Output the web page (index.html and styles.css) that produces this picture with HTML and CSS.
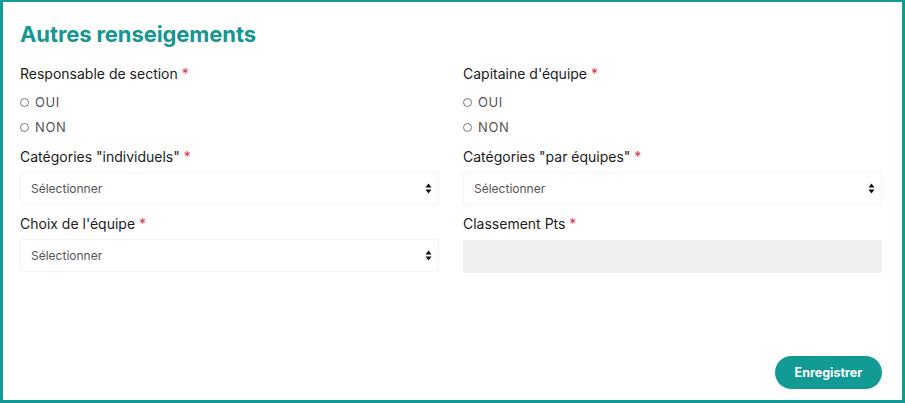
FILE: index.html
```html
<!DOCTYPE html>
<html lang="fr">
<head>
  <meta charset="UTF-8" />
  <meta name="viewport" content="width=device-width, initial-scale=1.0" />
  <title>Autres renseigements</title>
  <link rel="stylesheet" href="styles.css">
</head>
<body>
  <div class="panel">
    <h2>Autres renseigements</h2>
    <form class="form-grid" name="infosForm">
      <!-- Responsable / Capitaine -->
      <div class="field radio-field">
        <label class="field-label">Responsable de section <span class="req">*</span></label>
        <label class="radio"><input type="radio" name="responsable" value="oui"> OUI</label>
        <label class="radio"><input type="radio" name="responsable" value="non"> NON</label>
      </div>
      <div class="field radio-field">
        <label class="field-label">Capitaine d'équipe <span class="req">*</span></label>
        <label class="radio"><input type="radio" name="capitaine" value="oui"> OUI</label>
        <label class="radio"><input type="radio" name="capitaine" value="non"> NON</label>
      </div>

      <!-- Categories -->
      <div class="field">
        <label class="field-label" for="catIndiv">Catégories "individuels" <span class="req">*</span></label>
        <div class="select-wrap">
          <select id="catIndiv" name="catIndiv">
            <option value="">Sélectionner</option>
          </select>
          <svg class="arrows" width="7" height="11" viewBox="0 0 7 11"><path d="M3.5 0.5L6.5 4.5H0.5Z M3.5 10.5L0.5 6.5H6.5Z" fill="#111"/></svg>
        </div>
      </div>
      <div class="field">
        <label class="field-label" for="catEquipe">Catégories "par équipes" <span class="req">*</span></label>
        <div class="select-wrap">
          <select id="catEquipe" name="catEquipe">
            <option value="">Sélectionner</option>
          </select>
          <svg class="arrows" width="7" height="11" viewBox="0 0 7 11"><path d="M3.5 0.5L6.5 4.5H0.5Z M3.5 10.5L0.5 6.5H6.5Z" fill="#111"/></svg>
        </div>
      </div>

      <!-- Equipe / Classement -->
      <div class="field">
        <label class="field-label" for="equipe">Choix de l'équipe <span class="req">*</span></label>
        <div class="select-wrap">
          <select id="equipe" name="equipe">
            <option value="">Sélectionner</option>
          </select>
          <svg class="arrows" width="7" height="11" viewBox="0 0 7 11"><path d="M3.5 0.5L6.5 4.5H0.5Z M3.5 10.5L0.5 6.5H6.5Z" fill="#111"/></svg>
        </div>
      </div>
      <div class="field">
        <label class="field-label" for="classement">Classement Pts <span class="req">*</span></label>
        <input class="readonly" type="text" id="classement" name="classement" readonly>
      </div>
    </form>
    <div class="actions">
      <button type="submit" class="btn-save">Enregistrer</button>
    </div>
  </div>
</body>
</html>
```

FILE: styles.css
```css
* {
  box-sizing: border-box;
}

body {
  margin: 0;
  padding: 0;
  font-family: "Inter", "Noto Sans", sans-serif;
  background: #fff;
  color: #1c1c1c;
}

.panel {
  height: 100vh;
  border: 3px solid #129a94;
  border-top-width: 2px;
  padding: 18px 20px 11px 17px;
  display: flex;
  flex-direction: column;
}

.panel h2 {
  margin: 0 0 17px 0;
  font-size: 22px;
  line-height: 28px;
  font-weight: 700;
  color: #159690;
  letter-spacing: -0.1px;
}

.form-grid {
  display: grid;
  grid-template-columns: 1fr 1fr;
  column-gap: 24px;
  row-gap: 10px;
}

.field-label {
  display: block;
  font-size: 14px;
  line-height: 18px;
  margin-bottom: 6px;
  color: #1c1c1c;
}

.req {
  color: #e0314b;
}

.radio-field {
  padding-bottom: 2px;
}

.radio-field .field-label {
  margin-bottom: 10px;
}

.radio {
  display: flex;
  align-items: center;
  font-size: 13px;
  line-height: 18px;
  letter-spacing: 0.6px;
  color: #555;
  margin-bottom: 7px;
}

.radio:last-child {
  margin-bottom: 0;
}

.radio input {
  appearance: none;
  width: 9px;
  height: 9px;
  border: 1px solid #777;
  border-radius: 50%;
  margin: 0 6px 0 0;
}

.select-wrap {
  position: relative;
}

.select-wrap select {
  appearance: none;
  width: 100%;
  height: 33px;
  padding: 0 10px;
  border: 1px solid #f3f3f3;
  border-radius: 2px;
  background: #fff;
  font-family: inherit;
  font-size: 12px;
  color: #555;
}

.select-wrap .arrows {
  position: absolute;
  right: 7px;
  top: 11px;
}

.readonly {
  width: 100%;
  height: 33px;
  margin-top: 1px;
  border: none;
  background: #f0f0f0;
  border-radius: 2px;
}

.actions {
  margin-top: auto;
  display: flex;
  justify-content: flex-end;
}

.btn-save {
  background: #129a94;
  color: #fff;
  border: none;
  border-radius: 17px;
  width: 107px;
  height: 33px;
  font-family: inherit;
  font-size: 12.5px;
  font-weight: 700;
  cursor: pointer;
}
```
